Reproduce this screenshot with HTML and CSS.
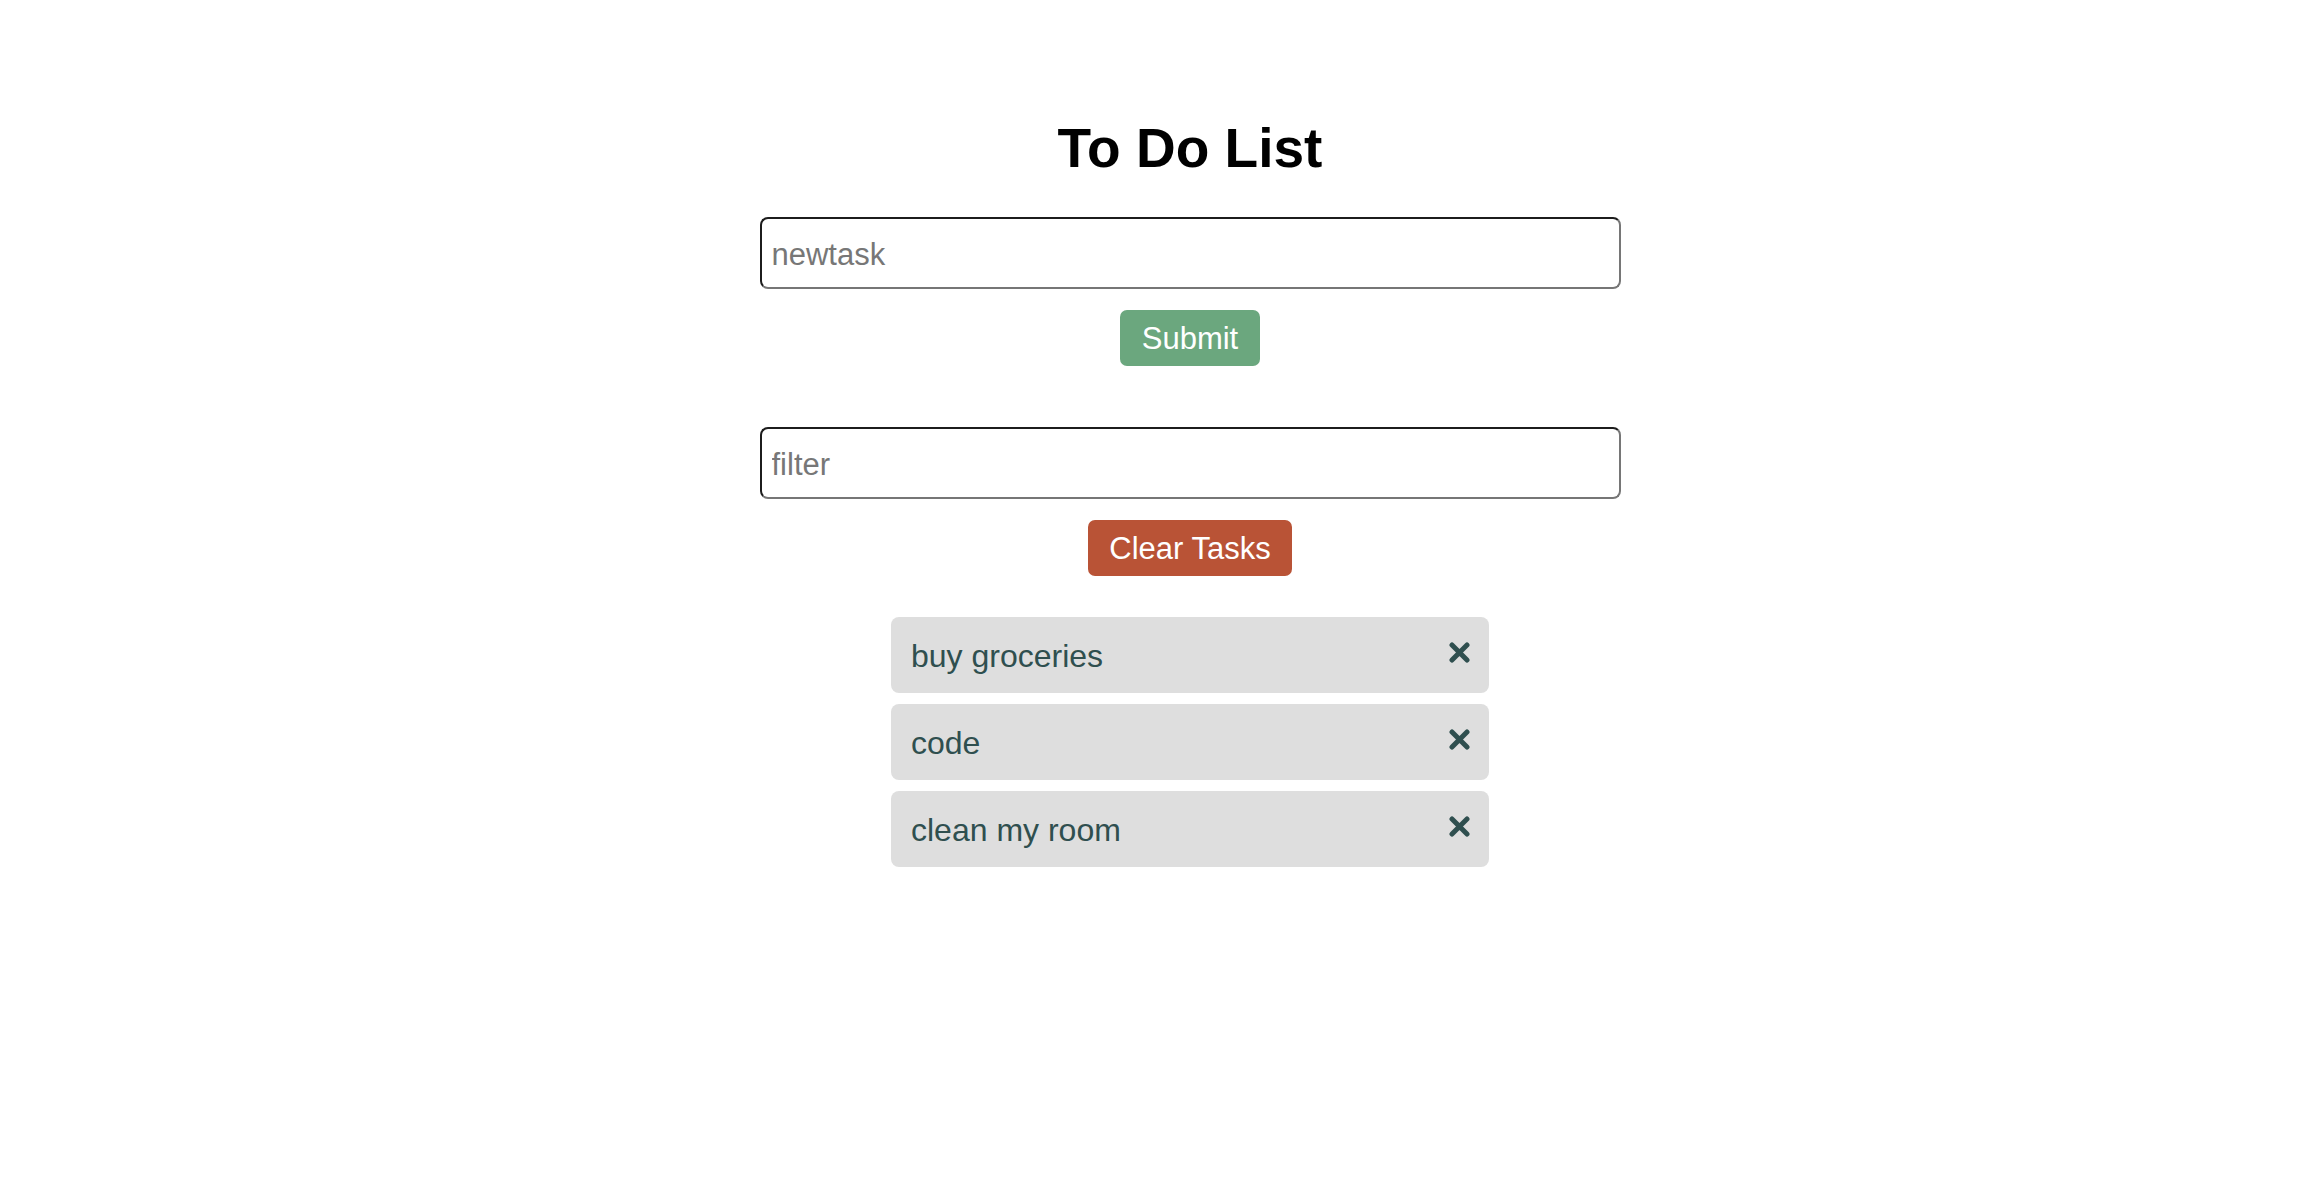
FILE: index.html
```html
<!DOCTYPE html>
<html lang="en">
<head>
<meta charset="utf-8">
<title>To Do List</title>
<link rel="stylesheet" href="styles.css">
</head>
<body>
<main class="app">
  <h1 class="title">To Do List</h1>
  <input class="field" type="text" placeholder="newtask">
  <button class="btn btn-submit" type="button">Submit</button>
  <input class="field field-filter" type="text" placeholder="filter">
  <button class="btn btn-clear" type="button">Clear Tasks</button>
  <ul class="tasks">
    <li class="task"><span class="task-text">buy groceries</span>
      <svg class="task-x" viewBox="0 0 21 21" width="21" height="21" aria-hidden="true"><path d="M3 3 L18 18 M18 3 L3 18"/></svg></li>
    <li class="task"><span class="task-text">code</span>
      <svg class="task-x" viewBox="0 0 21 21" width="21" height="21" aria-hidden="true"><path d="M3 3 L18 18 M18 3 L3 18"/></svg></li>
    <li class="task"><span class="task-text">clean my room</span>
      <svg class="task-x" viewBox="0 0 21 21" width="21" height="21" aria-hidden="true"><path d="M3 3 L18 18 M18 3 L3 18"/></svg></li>
  </ul>
</main>
</body>
</html>
```
FILE: styles.css
```css
* { box-sizing: border-box; }

html, body {
  margin: 0;
  background: #ffffff;
}

body {
  padding-left: 58px;
  font-family: "Liberation Sans", Arial, Helvetica, sans-serif;
}

.app {
  display: flex;
  flex-direction: column;
  align-items: center;
  padding-top: 116px;
}

.title {
  margin: 0;
  font-size: 55px;
  line-height: 64px;
  font-weight: 700;
  color: #000;
}

.field {
  display: block;
  width: 861px;
  height: 72px;
  margin-top: 37px;
  padding: 3px 10px 0;
  font-family: inherit;
  font-size: 31px;
  color: #222;
  background: #fff;
  border: 2px solid;
  border-color: #1c1c1c #767676 #767676 #1c1c1c;
  border-radius: 8px;
  outline: none;
}

.field::placeholder {
  color: #777777;
  opacity: 1;
}

.field-filter {
  margin-top: 61px;
}

.btn {
  display: block;
  height: 56px;
  margin-top: 21px;
  padding: 2px 22px 0;
  font-family: inherit;
  font-size: 31px;
  line-height: 54px;
  color: #ffffff;
  border: none;
  border-radius: 7px;
}

.btn-submit {
  background: #6ba77e;
}

.btn-clear {
  padding: 2px 21px 0;
  background: #b95336;
}

.tasks {
  list-style: none;
  margin: 41px 0 0;
  padding: 0;
  width: 598px;
  display: flex;
  flex-direction: column;
  gap: 11px;
}

.task {
  display: flex;
  align-items: center;
  justify-content: space-between;
  height: 76px;
  padding: 2px 19px 0 20px;
  background: #dedede;
  border-radius: 8px;
  color: #2f4f4f;
  font-size: 32px;
}

.task-x {
  flex: none;
  margin-top: -8px;
  fill: none;
  stroke: #2f4f4f;
  stroke-width: 5;
  stroke-linecap: round;
}
```
